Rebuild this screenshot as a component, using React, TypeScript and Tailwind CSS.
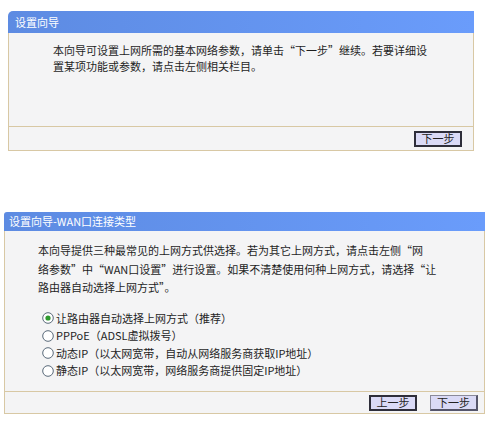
import React from "react";

const font = { fontFamily: '"Noto Sans CJK SC", "Noto Sans", sans-serif' };

function Radio({ checked }: { checked?: boolean }) {
  return (
    <svg width="12" height="12" viewBox="0 0 12 12" className="shrink-0">
      <circle cx="6" cy="6" r="5.3" fill="#ffffff" stroke="#5a6a7a" strokeWidth="1" />
      {checked && <circle cx="6" cy="6" r="2.6" fill="#2f9a2f" />}
    </svg>
  );
}

function Btn({ label, variant }: { label: string; variant: "dark" | "light" }) {
  return (
    <div
      className={
        "flex h-[16px] w-[48px] items-center justify-center bg-[#dadaf6] text-[11px] leading-none text-[#222] " +
        (variant === "dark"
          ? "border-2 border-[#2e2e3a]"
          : "border border-[#8a8a9a] border-r-2 border-b-2 border-r-[#55556a] border-b-[#55556a]")
      }
    >
      {label}
    </div>
  );
}

export default function App() {
  return (
    <div className="relative h-[424px] w-[491px] overflow-hidden bg-white text-[#1e1e1e]" style={font}>
      <div className="flex flex-col pt-[11px]">
        {/* Panel 1 */}
        <div className="ml-[8px] flex w-[466px] flex-col">
          <div className="flex h-[22px] items-center rounded-tl-[5px] bg-gradient-to-r from-[#5d8be2] to-[#6a9cfb] pl-[7px] text-[11px] text-white">
            设置向导
          </div>
          <div className="flex h-[93px] flex-col border-x border-[#d8c8a4] bg-[#f4f4f5] pl-[44px] pt-[9px] text-[11px] leading-[16px] whitespace-nowrap">
            <div>本向导可设置上网所需的基本网络参数，请单击“下一步”继续。若要详细设</div>
            <div>置某项功能或参数，请点击左侧相关栏目。</div>
          </div>
          <div className="flex h-[25px] items-center justify-end border border-[#d8c8a4] bg-[#f4f4f5] pr-[11px]">
            <Btn label="下一步" variant="dark" />
          </div>
        </div>

        {/* Panel 2 */}
        <div className="ml-[4px] mt-[61px] flex w-[481px] flex-col">
          <div className="flex h-[19px] items-center rounded-tl-[3px] bg-gradient-to-r from-[#5d8be2] to-[#6a9cfb] pl-[5px] text-[11px] text-white">
            设置向导-WAN口连接类型
          </div>
          <div className="flex h-[160px] flex-col border-x border-[#d8c8a4] bg-[#f4f4f5] pt-[10px] text-[11px] whitespace-nowrap">
            <div className="pl-[33px] leading-[18.5px]">
              <div>本向导提供三种最常见的上网方式供选择。若为其它上网方式，请点击左侧“网</div>
              <div>络参数”中“WAN口设置”进行设置。如果不清楚使用何种上网方式，请选择“让</div>
              <div>路由器自动选择上网方式”。</div>
            </div>
            <div className="mt-[13px] flex flex-col pl-[37px] leading-[17.5px]">
              <div className="flex h-[17.5px] items-center gap-[2px]">
                <Radio checked />
                <span>让路由器自动选择上网方式（推荐）</span>
              </div>
              <div className="flex h-[17.5px] items-center gap-[2px]">
                <Radio />
                <span>PPPoE（ADSL虚拟拨号）</span>
              </div>
              <div className="flex h-[17.5px] items-center gap-[2px]">
                <Radio />
                <span>动态IP（以太网宽带，自动从网络服务商获取IP地址）</span>
              </div>
              <div className="flex h-[17.5px] items-center gap-[2px]">
                <Radio />
                <span>静态IP（以太网宽带，网络服务商提供固定IP地址）</span>
              </div>
            </div>
          </div>
          <div className="flex h-[23px] items-center justify-end gap-[13px] border border-[#d8c8a4] bg-[#f4f4f5] pr-[6px]">
            <Btn label="上一步" variant="dark" />
            <Btn label="下一步" variant="light" />
          </div>
        </div>
      </div>
    </div>
  );
}
